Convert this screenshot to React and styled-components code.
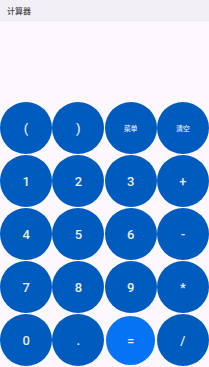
import React from 'react'
import styled, { createGlobalStyle } from 'styled-components'

const GlobalStyle = createGlobalStyle`
  html, body {
    margin: 0;
    padding: 0;
    background: #fdf8fd;
    font-family: Roboto, "Noto Sans CJK SC", sans-serif;
  }
`;

const Screen = styled.div`
    display: flex;
    flex-direction: column;
    height: 100vh;
    overflow: hidden;
    background: #fdf8fd;
`;

const Header = styled.div`
    height: 20px;
    flex-shrink: 0;
    display: flex;
    align-items: center;
    padding-left: 7px;
    background: #f3eff6;
    box-shadow: 0 1px 1px rgba(0, 0, 0, 0.05);
    font-size: 8px;
    font-weight: 500;
    color: #4a4a4a;
`;

const Display = styled.div`
    flex: 1;
`;

const Keypad = styled.div`
    display: grid;
    grid-template-columns: repeat(4, 1fr);
    grid-auto-rows: 53px;
`;

const Key = styled.button`
    justify-self: center;
    align-self: ${p => (p.$accent ? 'center' : 'start')};
    width: ${p => (p.$accent ? '49px' : '52px')};
    height: ${p => (p.$accent ? '49px' : '52px')};
    margin-top: ${p => (p.$accent ? '-1px' : '0')};
    border: none;
    border-radius: 50%;
    padding: 0;
    background: ${p => (p.$accent ? '#0672f4' : '#005bbf')};
    color: #e6ecf6;
    font-family: Roboto, "Noto Sans CJK SC", sans-serif;
    font-size: ${p => (p.$small ? '7px' : '13px')};
    font-weight: 500;
    display: flex;
    align-items: center;
    justify-content: center;
`;

const keys = [
    { label: '(' },
    { label: ')' },
    { label: '菜单', small: true },
    { label: '清空', small: true },
    { label: '1' },
    { label: '2' },
    { label: '3' },
    { label: '+' },
    { label: '4' },
    { label: '5' },
    { label: '6' },
    { label: '-' },
    { label: '7' },
    { label: '8' },
    { label: '9' },
    { label: '*' },
    { label: '0' },
    { label: '.' },
    { label: '=', accent: true },
    { label: '/' },
];

const App = () => {
  return (
    <Screen>
        <GlobalStyle/>
        <Header>计算器</Header>
        <Display/>
        <Keypad>
            {keys.map(k => (
                <Key key={k.label} $small={k.small} $accent={k.accent}>
                    {k.label}
                </Key>
            ))}
        </Keypad>
    </Screen>
  )
}

export default App
